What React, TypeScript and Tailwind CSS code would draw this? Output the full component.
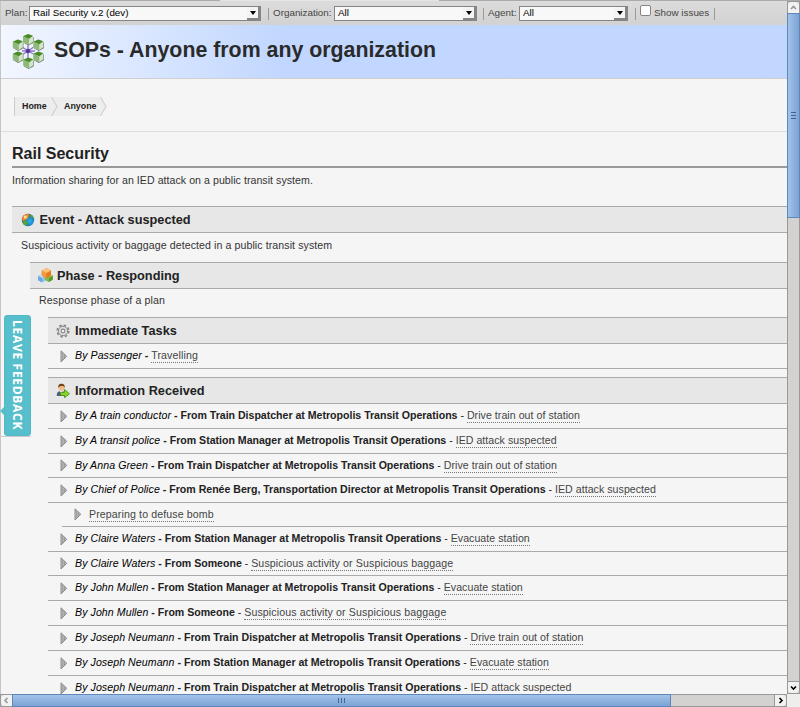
import React from "react";

type Row = { h: number; by?: string; from?: string; link: string; sub?: boolean; wide?: boolean };

const T = " at Metropolis Transit Operations";
const ROWS: Row[] = [
  { h: 25, by: "By A train conductor", from: "From Train Dispatcher" + T, link: "Drive train out of station" },
  { h: 25, by: "By A transit police", from: "From Station Manager" + T, link: "IED attack suspected" },
  { h: 24, by: "By Anna Green", from: "From Train Dispatcher" + T, link: "Drive train out of station" },
  { h: 25, by: "By Chief of Police", from: "From Renée Berg, Transportation Director" + T, link: "IED attack suspected" },
  { h: 24, link: "Preparing to defuse bomb", sub: true, wide: true },
  { h: 25, by: "By Claire Waters", from: "From Station Manager" + T, link: "Evacuate station" },
  { h: 24, by: "By Claire Waters", from: "From Someone", link: "Suspicious activity or Suspicious baggage", wide: true },
  { h: 25, by: "By John Mullen", from: "From Station Manager" + T, link: "Evacuate station" },
  { h: 25, by: "By John Mullen", from: "From Someone", link: "Suspicious activity or Suspicious baggage", wide: true },
  { h: 25, by: "By Joseph Neumann", from: "From Train Dispatcher" + T, link: "Drive train out of station" },
  { h: 25, by: "By Joseph Neumann", from: "From Station Manager" + T, link: "Evacuate station" },
  { h: 25, by: "By Joseph Neumann", from: "From Train Dispatcher" + T, link: "IED attack suspected" },
];

function Arrow() {
  return (
    <svg width="8" height="13" viewBox="0 0 8 13" className="shrink-0">
      <path d="M1 .8 6.8 6.3 1 12Z" fill="#bdbdbd" stroke="#8b8b8b" />
      <path d="M2.8 3v7M4.5 4.8v3.5" stroke="#929292" strokeWidth=".8" />
    </svg>
  );
}

function TaskRow({ row }: { row: Row }) {
  return (
    <div
      className={`flex items-center border-b border-[#aaa] pl-[12px] whitespace-nowrap text-[10.6px] leading-[13px] ${row.sub ? "ml-[14px]" : ""}`}
      style={{ height: row.h }}
    >
      <Arrow />
      <div className="ml-[7px] text-[#222]">
        {row.by && <><i className="tracking-[0.07px] text-black">{row.by}</i><b>{" - "}</b></>}
        {row.from && <><b className="tracking-[-0.015px]">{row.from}</b>{" - "}</>}
        <span className={`inline-block h-[14px] border-b border-dotted border-[#777] text-[#444] ${row.wide ? "tracking-[0.12px]" : "tracking-[0.045px]"}`}>{row.link}</span>
      </div>
    </div>
  );
}

function Header({ icon, children, className }: { icon: React.ReactNode; children: React.ReactNode; className: string }) {
  return (
    <div className={`flex h-[27px] items-center border-y border-[#aaa] bg-[#e7e7e7] text-[12.75px] font-bold text-[#222] whitespace-nowrap ${className}`}>
      {icon}
      <span>{children}</span>
    </div>
  );
}

function Cube({ x, y, s, top, left, right }: { x: number; y: number; s: number; top: string; left: string; right: string }) {
  return (
    <g transform={`translate(${x} ${y}) scale(${s})`}>
      <path d="M0-5 5-2.5V3L0 5.8-5 3V-2.5Z" fill={right} />
      <path d="M-5-2.5 0 0V5.8L-5 3Z" fill={left} />
      <path d="M0-5 5-2.5 0 0-5-2.5Z" fill={top} />
    </g>
  );
}

function Logo() {
  const pts = [[16, 6], [5.8, 11.5], [26.3, 11.5], [5.8, 23.5], [26.3, 23.5], [16.2, 29.5]];
  return (
    <svg width="33" height="37" viewBox="0 0 33 37" className="shrink-0">
      <path d="M16 11v14M10 14l13 8M22.500 13.500 10 22M10 18h13" stroke="#8f7cc4" strokeWidth="1.4" />
      <circle cx="16" cy="18" r="2.2" fill="#56349b" />
      {pts.map(([x, y]) => (
        <g key={`${x}-${y}`}>
          <Cube x={x + 0.7} y={y + 0.7} s={1} top="#7f8d7c" left="#7f8d7c" right="#7f8d7c" />
          <g transform={`translate(${x} ${y})`}>
            <path d="M-5-2.800 0-5 5-3.300V2.800L1 5.500-5 3Z" fill="#d3e5c9" />
            <path d="M-5-2.800 1-.3V5.500L-5 3Z" fill="#8fb979" />
            <path d="M0-5 5-3.300 1-.3-5-2.800Z" fill="#4b8a28" />
          </g>
        </g>
      ))}
    </svg>
  );
}

function Globe() {
  return (
    <svg width="14" height="14" viewBox="0 0 14 14">
      <defs>
        <radialGradient id="globe" cx=".65" cy=".6" r=".6"><stop stopColor="#27b8ee" /><stop offset="1" stopColor="#1553a8" /></radialGradient>
      </defs>
      <circle cx="7" cy="7" r="6.2" fill="url(#globe)" />
      <path d="M1 7C1 3 4 .8 7 .8c2 1 1 3 0 4.2S4 7.500 2.500 8Z" fill="#f08a28" />
      <circle cx="4.300" cy="4" r="1.600" fill="#ffe28a" />
      <path d="M8 1c3 .5 4.500 2.500 5 5l-3-1.500ZM1.300 8.500 5 7.500 7 10 5.500 13C3 12 1.600 10.500 1.300 8.500Z" fill="#50a43a" />
    </svg>
  );
}

function Cubes() {
  return (
    <svg width="15" height="15" viewBox="0 0 15 15">
      <Cube x={4.200} y={9.800} s={0.8} top="#c5e3fa" left="#6ba6dc" right="#8fc4ee" />
      <Cube x={11} y={9.400} s={0.78} top="#b6dc80" left="#82b94b" right="#5c9a2a" />
      <Cube x={8.400} y={4.900} s={0.92} top="#ffc477" left="#f39a3d" right="#e37a1e" />
    </svg>
  );
}

function Gear() {
  return (
    <svg width="14" height="14" viewBox="0 0 14 14" fill="none" stroke="#858585">
      <circle cx="7" cy="7" r="5.900" strokeWidth="1.500" strokeDasharray="2.500 2.134" />
      <circle cx="7" cy="7" r="4.700" fill="#dedede" strokeWidth="1" />
      <circle cx="7" cy="7" r="1.900" fill="#f1f1f1" strokeWidth="1.100" />
    </svg>
  );
}

function Person() {
  return (
    <svg width="14" height="15" viewBox="0 0 14 15">
      <path d="M.8 13C.5 9.500 2 8 5 8s4.500 1.500 4.500 5Z" fill="#4d5f80" />
      <path d="M3.500 8 5.200 12 7 8Z" fill="#f5eee4" />
      <circle cx="5.500" cy="4.800" r="3" fill="#f0bd86" />
      <path d="M2.400 5C1.800 1.800 3.500.7 5.500.7s3.800 1 3 4.300C8 3.500 7.500 3 6 3S3 3.500 2.400 5Z" fill="#754018" />
      <path d="M4.500 9.300H8.500V6.500l5 4.300L8.500 14.800v-2.400h-4Z" fill="#8bd52b" stroke="#3c8b17" strokeWidth=".8" />
    </svg>
  );
}

function Select({ className, children }: { className: string; children: string }) {
  return (
    <div className={`flex h-[15px] items-center border border-[#858585] bg-[#f8f8f8] pl-[3px] text-black ${className}`}>
      <span className="grow whitespace-nowrap">{children}</span>
      <span className="flex h-[13px] w-[13px] items-center justify-center border-r-2 border-b-2 border-[#858585] bg-[#f4f4f4]">
        <svg width="6" height="4" viewBox="0 0 6 4"><path d="M0 0h6L3 4Z" fill="#000" /></svg>
      </span>
    </div>
  );
}

function Sep({ className }: { className: string }) {
  return <div className={`h-[12px] w-px shrink-0 bg-[#999] ${className}`} />;
}

function Chevron({ d }: { d: string }) {
  return <svg width="7" height="7" viewBox="0 0 7 7" fill="none"><path d={d} stroke="currentColor" strokeWidth="1.6" /></svg>;
}

export default function App() {
  return (
    <div className="relative flex h-[707px] w-[800px] flex-col overflow-hidden bg-[#eeeeed] font-['Liberation_Sans',Arial,sans-serif]">
      <div className="flex h-px shrink-0">
        <div className="w-[220px] bg-[#aaa]" /><div className="w-[219px] bg-[#e5e5e5]" /><div className="grow bg-[#aaa]" />
      </div>
      <div className="flex h-[693px] shrink-0">
        <main className="h-[693px] w-[787px] shrink-0 overflow-hidden border-l border-[#c5c5c5] bg-[#f5f5f5]">
          <div className="flex h-[24px] items-center bg-linear-to-b from-[#dcdcdc] to-[#d2d2d2] pt-px pl-[4px] text-[9.85px] text-[#444] whitespace-nowrap">
            <span className="w-[24px]">Plan:</span>
            <Select className="w-[232px]">Rail Security v.2 (dev)</Select>
            <Sep className="ml-[7px]" />
            <span className="ml-[4px] w-[61px]">Organization:</span>
            <Select className="w-[143px]">All</Select>
            <Sep className="ml-[6px]" />
            <span className="ml-[4px] w-[31px]">Agent:</span>
            <Select className="w-[109px]">All</Select>
            <Sep className="ml-[7px]" />
            <span className="mb-[6px] ml-[4px] h-[11px] w-[11px] rounded-[2px] border border-[#858585] bg-white" />
            <span className="ml-[3px] w-[58px]">Show issues</span>
            <Sep className="ml-[2px]" />
          </div>
          <div className="flex h-[54px] items-center border-b border-[#cfcfd2] bg-linear-to-r from-[#f2f6ff] to-[#c1d7ff] to-[36%] pl-[11px]">
            <Logo />
            <h1 className="mb-[2px] ml-[9px] text-[21.33px] font-bold text-[#2a2a2a] whitespace-nowrap">SOPs - Anyone from any organization</h1>
          </div>
          <div className="h-[53px] border-b border-[#dedede] pt-[18px] pl-[13px]">
            <div className="flex h-[19px] w-[93px] items-center border-l border-[#ccc] text-[8.9px] font-bold text-[#222]">
              <div className="flex h-full w-[43px] items-center bg-[#ededed] pl-[7px]"><span className="grow">Home</span>
                <svg className="shrink-0" width="7" height="19" viewBox="0 0 7 19"><path d="M.5 0 6 9.500.5 19" stroke="#c8c8c8" fill="none" /></svg>
              </div>
              <div className="flex h-full w-[49px] items-center bg-[#ededed] pl-[6px]"><span className="grow">Anyone</span>
                <svg className="shrink-0" width="7" height="19" viewBox="0 0 7 19"><path d="M.5 0H7V19H.5L6 9.500Z" fill="#f5f5f5" /><path d="M.5 0 6 9.500.5 19" stroke="#c8c8c8" fill="none" /></svg>
              </div>
            </div>
          </div>
          <div className="pl-[11px]">
            <h2 className="h-[36px] border-b-2 border-[#999] pt-[11px] text-[16px] leading-[22px] font-bold text-[#222]">Rail Security</h2>
            <p className="h-[38px] pt-[6px] text-[10.6px] leading-[13px] tracking-[0.045px] text-[#333]">Information sharing for an IED attack on a public transit system.</p>
            <Header className="gap-[4.5px] pl-[9px]" icon={<Globe />}>Event - Attack suspected</Header>
            <p className="h-[29px] pt-[6px] pl-[9px] text-[10.6px] leading-[13px] tracking-[0.085px] text-[#333]">Suspicious activity or baggage detected in a public transit system</p>
            <div className="pl-[18px]">
              <Header className="gap-[4px] pl-[8px]" icon={<Cubes />}>Phase - Responding</Header>
              <p className="h-[28px] pt-[5px] pl-[9px] text-[10.6px] leading-[13px] tracking-[0.12px] text-[#333]">Response phase of a plan</p>
              <div className="pl-[18px]">
                <Header className="gap-[5px] pl-[8px]" icon={<Gear />}>Immediate Tasks</Header>
                <TaskRow row={{ h: 25, by: "By Passenger", link: "Travelling", wide: true }} />
                <Header className="mt-[8px] gap-[5px] pl-[8px]" icon={<Person />}>Information Received</Header>
                {ROWS.map((r, i) => <TaskRow key={i} row={r} />)}
              </div>
            </div>
          </div>
        </main>
        <div className="flex w-[13px] flex-col border border-[#999] bg-[#d3d2d0]">
          <div className="flex h-[11px] items-center justify-center rounded-t bg-[#f2f2f1] text-[#999]"><Chevron d="M1 5 3.500 2.500 6 5" /></div>
          <div className="-mx-px flex h-[205px] flex-col items-center justify-center gap-[2px] border border-[#5f87b8] bg-linear-to-r from-[#a3c3e9] to-[#7ba3d5]">
            <i className="h-px w-[5px] bg-[#42658f]" /><i className="h-px w-[5px] bg-[#42658f]" /><i className="h-px w-[5px] bg-[#42658f]" />
          </div>
          <div className="grow" />
          <div className="flex h-[12px] items-center justify-center rounded-b border-t border-[#999] bg-[#f2f2f1] text-black"><Chevron d="M1 2.500 3.500 5 6 2.500" /></div>
        </div>
      </div>
      <div className="flex h-[13px] w-[787px] shrink-0 border border-[#999] bg-[#d3d2d0]">
        <div className="flex w-[11px] items-center justify-center rounded-l bg-[#f2f2f1] text-[#999]"><Chevron d="M4.500 1 2 3.500 4.500 6" /></div>
        <div className="-my-px flex w-[659px] items-center justify-center gap-[2px] border border-[#5f87b8] bg-linear-to-b from-[#a3c3e9] to-[#7ba3d5]">
          <i className="h-[5px] w-px bg-[#42658f]" /><i className="h-[5px] w-px bg-[#42658f]" /><i className="h-[5px] w-px bg-[#42658f]" />
        </div>
        <div className="grow" />
        <div className="flex w-[12px] items-center justify-center rounded-r border-l border-[#999] bg-[#f2f2f1] text-black"><Chevron d="M2.500 1 5 3.500 2.500 6" /></div>
      </div>
      <div className="absolute top-[314px] left-0 h-[123px] w-[31px] border-b border-[#ccc]">
        <svg className="absolute top-[92px] left-0" width="5" height="10" viewBox="0 0 5 10"><path d="M5 0 0 5 5 10Z" fill="#57becb" /></svg>
        <div className="absolute top-px left-[4px] flex h-[121px] w-[27px] items-center justify-center rounded-[4px] bg-[#57becb] text-[12px] font-bold tracking-[0.7px] text-white shadow-[inset_0_0_1px_#338e9b] [writing-mode:vertical-rl]">
          <span className="mr-px font-['Open_Sans',sans-serif] whitespace-nowrap">LEAVE FEEDBACK</span>
        </div>
      </div>
    </div>
  );
}
